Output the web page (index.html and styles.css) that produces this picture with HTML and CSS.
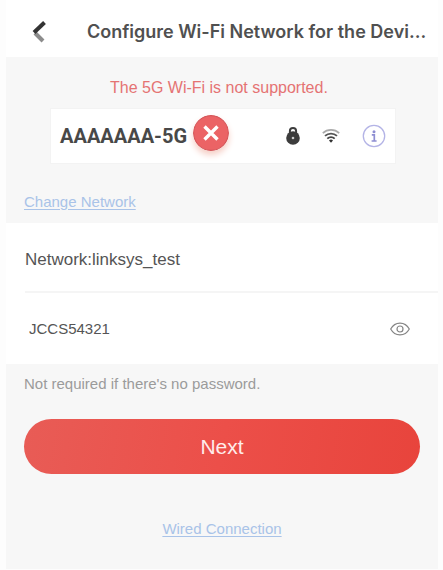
FILE: index.html
```html
<!DOCTYPE html>
<html lang="en">
<head>
<meta charset="utf-8">
<meta name="viewport" content="width=device-width, initial-scale=1">
<title>Configure Wi-Fi Network</title>
<link rel="stylesheet" href="styles.css">
</head>
<body>
<main class="screen">
  <header class="header">
    <button class="back" type="button" aria-label="Back">
      <svg width="14" height="22" viewBox="0 0 14 22">
        <path d="M3 12L11 20" stroke="#8c8c8c" stroke-width="4" fill="none"/>
        <path d="M12.500 1.500L2 11.500" stroke="#333" stroke-width="4" fill="none"/>
      </svg>
    </button>
    <h1 class="title">Configure Wi-Fi Network for the Devi...</h1>
  </header>

  <section class="notice">
    <p class="warning">The 5G Wi-Fi is not supported.</p>
    <div class="network">
      <span class="ssid">AAAAAAA-5G</span>
      <svg class="cross" width="36" height="36" viewBox="0 0 36 36">
        <circle cx="18" cy="18" r="17.400" fill="#eb6365" stroke="#d5575a" stroke-width="1.200"/>
        <path d="M11.500 11.500L24.500 24.500M24.500 11.500L11.500 24.500" stroke="#fff" stroke-width="3.400"/>
      </svg>
      <svg class="lock" width="14" height="18" viewBox="0 0 14 18">
        <path d="M3.900 7V4.100a3.100 3.100 0 0 1 6.200 0V7" fill="none" stroke="#3c3c3c" stroke-width="2"/>
        <circle cx="7" cy="11" r="6.800" fill="#3c3c3c"/>
        <circle cx="7" cy="11" r="1.300" fill="#ccc"/>
      </svg>
      <svg class="wifi" width="18" height="14" viewBox="0 0 18 14" fill="none">
        <path d="M.8 4.200a12 12 0 0 1 16.400 0" stroke="#aaa" stroke-width="1.700"/>
        <path d="M3 6.900a9 9 0 0 1 12 0" stroke="#555" stroke-width="1.900"/>
        <path d="M5.300 9.600a5.600 5.600 0 0 1 7.400 0" stroke="#444" stroke-width="1.900"/>
        <path d="M7 11.500a3 3 0 0 1 4 0L9 13.800z" fill="#333"/>
      </svg>
      <button class="info" type="button" aria-label="Network details">
        <svg width="24" height="24" viewBox="0 0 24 24">
          <circle cx="12" cy="12" r="10.700" fill="none" stroke="#b4b4e6" stroke-width="1.300"/>
          <circle cx="12" cy="7.700" r="1.500" fill="#8e8ed2"/>
          <path d="M9.800 10.800h2.500v6M9.600 17h5" fill="none" stroke="#8e8ed2" stroke-width="1.700"/>
        </svg>
      </button>
    </div>
    <a class="link" href="#networks">Change Network</a>
  </section>

  <section class="fields">
    <div class="row current">Network:linksys_test</div>
    <div class="row secret">
      <input class="password" type="text" value="JCCS54321" aria-label="Wi-Fi password">
      <button class="eye" type="button" aria-label="Hide password">
        <svg width="20" height="14" viewBox="0 0 20 14" fill="none" stroke="#858585" stroke-width="1.200">
          <path d="M.7 7C5 -.9 15 -.9 19.300 7C15 14.900 5 14.900 .7 7z"/>
          <circle cx="10" cy="7" r="3"/>
        </svg>
      </button>
    </div>
  </section>

  <section class="actions">
    <p class="hint">Not required if there's no password.</p>
    <button class="next" type="button">Next</button>
    <a class="link wired" href="#wired">Wired Connection</a>
  </section>
</main>
</body>
</html>
```
FILE: styles.css
```css
* {
  box-sizing: border-box;
}

body {
  margin: 0;
  background: #fdfdfd;
  color: #555;
  font-family: "Liberation Sans", Arial, sans-serif;
  font-size: 15px;
  line-height: 20px;
}

h1,
p {
  margin: 0;
}

button {
  padding: 0;
  border: 0;
  background: none;
  font: inherit;
}

svg {
  display: block;
  flex: none;
}

.screen {
  margin: 0 5px 0 6px;
  background: #f7f7f7;
}

.header {
  display: flex;
  align-items: center;
  gap: 41px;
  height: 57px;
  padding: 6px 8px 0 26px;
  background: #fff;
}

.title {
  font-family: Inter, sans-serif;
  font-size: 18px;
  font-weight: 600;
  line-height: 24px;
  color: #505050;
  white-space: nowrap;
}

.notice {
  display: flex;
  flex-direction: column;
  height: 166px;
  padding: 21px 42px 0 44px;
}

.warning {
  padding-left: 60px;
  font-size: 16px;
  color: #e57373;
}

.network {
  display: flex;
  align-items: center;
  height: 56px;
  margin-top: 10px;
  padding: 0 9px;
  border: 1px solid #f3f3f3;
  background: #fff;
}

.ssid {
  font-family: Roboto, sans-serif;
  font-size: 20px;
  font-weight: 700;
  color: #484848;
}

.cross {
  margin: 0 auto 6px 6px;
  border-radius: 50%;
  box-shadow: 0 4px 6px #f6cfc6;
}

.wifi {
  margin: 0 22px;
}

.link {
  align-self: flex-start;
  color: #a9c3e8;
  text-underline-offset: 2px;
}

.notice .link {
  margin: 28px 0 0 -26px;
}

.fields {
  padding-left: 19px;
  background: #fff;
}

.row {
  display: flex;
  align-items: center;
  height: 70px;
}

.current {
  padding-top: 6px;
  border-bottom: 2px solid #f5f5f5;
  font-size: 17px;
}

.secret {
  height: 71px;
  padding: 0 28px 0 4px;
}

.password {
  flex: 1;
  min-width: 0;
  padding: 0;
  border: 0;
  outline: 0;
  background: none;
  color: #555;
  font: inherit;
}

.actions {
  display: flex;
  flex-direction: column;
  padding: 10px 18px 30px;
}

.hint {
  color: #9b9b9b;
}

.next {
  height: 55px;
  margin-top: 25px;
  border-radius: 28px;
  background: linear-gradient(100deg, #e85c56, #ec4f49 50%, #e8443c);
  color: #ffeceb;
  font-size: 21px;
}

.wired {
  align-self: center;
  margin-top: 45px;
}
```
